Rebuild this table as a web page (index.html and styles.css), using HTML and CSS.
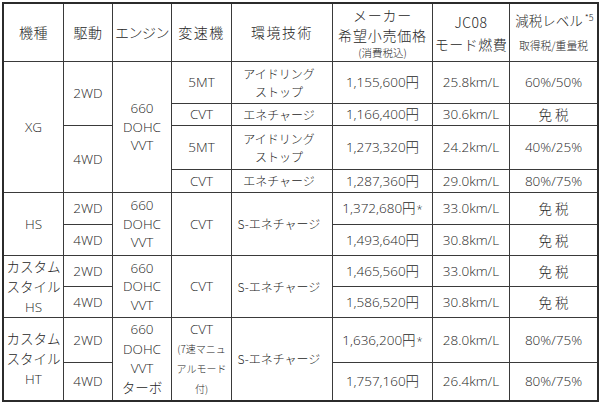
FILE: index.html
```html
<!DOCTYPE html>
<html lang="ja">
<head>
<meta charset="utf-8">
<title>グレード別価格表</title>
<link rel="stylesheet" href="styles.css">
</head>
<body>
<div class="spec">
  <div class="c hd">機種</div>
  <div class="c hd">駆動</div>
  <div class="c hd tight">エンジン</div>
  <div class="c hd wide">変速機</div>
  <div class="c hd wide">環境技術</div>
  <div class="c hd price-hd"><span class="l1">メーカー</span><span class="l1">希望小売価格</span><span class="sm">(消費税込)</span></div>
  <div class="c hd fuel-hd"><span>JC08</span><span>モード燃費</span></div>
  <div class="c hd tax-hd"><span class="tax-t">減税レベル<span class="note">*5</span></span><span class="sm2">取得税/重量税</span></div>

  <div class="c s4">XG</div>
  <div class="c s2">2WD</div>
  <div class="c s4 eng">660<br>DOHC<br>VVT</div>
  <div class="c">5MT</div>
  <div class="c kana">アイドリング<br>ストップ</div>
  <div class="c">1,155,600円</div>
  <div class="c">25.8km/L</div>
  <div class="c">60%/50%</div>

  <div class="c">CVT</div>
  <div class="c kana">エネチャージ</div>
  <div class="c">1,166,400円</div>
  <div class="c">30.6km/L</div>
  <div class="c menzei">免税</div>

  <div class="c s2">4WD</div>
  <div class="c">5MT</div>
  <div class="c kana">アイドリング<br>ストップ</div>
  <div class="c">1,273,320円</div>
  <div class="c">24.2km/L</div>
  <div class="c">40%/25%</div>

  <div class="c">CVT</div>
  <div class="c kana">エネチャージ</div>
  <div class="c">1,287,360円</div>
  <div class="c">29.0km/L</div>
  <div class="c">80%/75%</div>

  <div class="c s2">HS</div>
  <div class="c">2WD</div>
  <div class="c s2 eng">660<br>DOHC<br>VVT</div>
  <div class="c s2">CVT</div>
  <div class="c s2 kana">S-エネチャージ</div>
  <div class="c"><span>1,372,680円<span class="ast">*</span></span></div>
  <div class="c">33.0km/L</div>
  <div class="c menzei">免税</div>

  <div class="c">4WD</div>
  <div class="c">1,493,640円</div>
  <div class="c">30.8km/L</div>
  <div class="c menzei">免税</div>

  <div class="c s2 model">カスタム<br>スタイル<br>HS</div>
  <div class="c">2WD</div>
  <div class="c s2 eng">660<br>DOHC<br>VVT</div>
  <div class="c s2">CVT</div>
  <div class="c s2 kana">S-エネチャージ</div>
  <div class="c">1,465,560円</div>
  <div class="c">33.0km/L</div>
  <div class="c menzei">免税</div>

  <div class="c">4WD</div>
  <div class="c">1,586,520円</div>
  <div class="c">30.8km/L</div>
  <div class="c menzei">免税</div>

  <div class="c s2 model">カスタム<br>スタイル<br>HT</div>
  <div class="c">2WD</div>
  <div class="c s2 eng eng4">660<br>DOHC<br>VVT<br>ターボ</div>
  <div class="c s2 cvt7"><span>CVT</span><span class="sm3">(7速マニュ</span><span class="sm3">アルモード</span><span class="sm3">付)</span></div>
  <div class="c s2 kana">S-エネチャージ</div>
  <div class="c"><span>1,636,200円<span class="ast">*</span></span></div>
  <div class="c">28.0km/L</div>
  <div class="c">80%/75%</div>

  <div class="c">4WD</div>
  <div class="c">1,757,160円</div>
  <div class="c">26.4km/L</div>
  <div class="c">80%/75%</div>
</div>
</body>
</html>
```
FILE: styles.css
```css
html, body {
  margin: 0;
  padding: 0;
  background: #ffffff;
}

body {
  font-family: "Open Sans", "Noto Sans CJK JP", sans-serif;
  font-weight: 300;
  color: #262626;
}

.spec {
  margin: 2px 0 0 2px;
  width: 597px;
  box-sizing: border-box;
  border: 2px solid #2b2b2b;
  background: #3a3a3a;
  display: grid;
  grid-template-columns: 59px 48px 58px 59px 100px 99px 76px 87px;
  grid-template-rows: 57px 41px 21px 43px 22px 31px 30px 30px 30px 44px 37px;
  gap: 1px;
}

.c {
  background: #ffffff;
  display: flex;
  flex-direction: column;
  align-items: center;
  justify-content: center;
  text-align: center;
  font-size: 13.5px;
  line-height: 19px;
  white-space: nowrap;
}

.s2 { grid-row: span 2; }
.s4 { grid-row: span 4; }

.hd {
  font-family: "Noto Sans CJK JP", sans-serif;
  font-size: 14px;
  letter-spacing: 0.5px;
  line-height: 21px;
}
.hd.wide { letter-spacing: 1.5px; }
.hd.tight { letter-spacing: -0.5px; }

.price-hd .l1 {
  line-height: 20px;
  letter-spacing: 0.8px;
}
.price-hd .sm {
  font-size: 10.5px;
  line-height: 16px;
  letter-spacing: 0;
}

.fuel-hd span {
  line-height: 22px;
}

.tax-t {
  font-size: 13.5px;
  line-height: 22px;
  letter-spacing: 0;
  padding-left: 2px;
}
.note {
  font-size: 9px;
  position: relative;
  top: -5px;
  margin-left: 2px;
}
.sm2 {
  font-size: 10.8px;
  line-height: 22px;
  letter-spacing: 0;
}

.kana {
  font-family: "Noto Sans CJK JP", sans-serif;
  font-size: 12px;
  line-height: 18px;
  padding-right: 6px;
}

.eng {
  line-height: 18.5px;
}
.eng4 {
  line-height: 19.5px;
}

.model {
  line-height: 20px;
}

.menzei {
  font-family: "Noto Sans CJK JP", sans-serif;
  letter-spacing: 3px;
  padding-left: 3px;
}

.ast {
  font-size: 11px;
  margin-left: 1px;
}

.cvt7 .sm3 {
  font-family: "Noto Sans CJK JP", sans-serif;
  font-size: 10px;
  line-height: 20px;
}
```
